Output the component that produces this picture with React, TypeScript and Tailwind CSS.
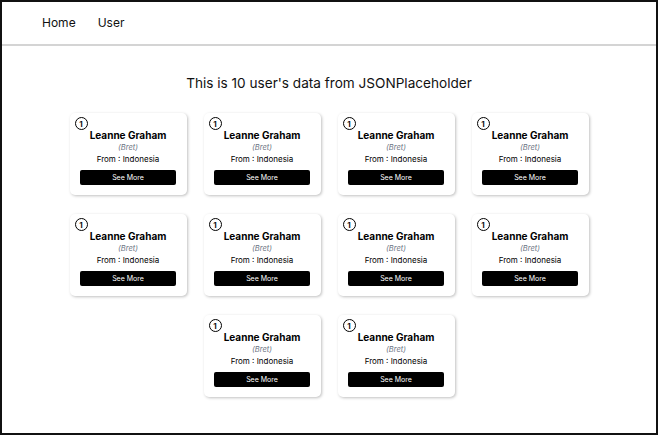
import React from "react";

const users = Array.from({ length: 10 }, () => ({
  id: 1,
  name: "Leanne Graham",
  username: "Bret",
  from: "Indonesia",
}));

function UserCard({ user }: { user: (typeof users)[number] }) {
  return (
    <div className="w-[117px] h-[82px] bg-white rounded-[5px] shadow-[1px_1px_3px_rgba(0,0,0,0.25)] px-[5px] pt-[4px] flex flex-col">
      <div className="w-[13px] h-[13px] rounded-full border-[1.5px] border-black flex items-center justify-center text-[8px] font-bold leading-none">
        {user.id}
      </div>
      <div className="text-center -mt-[1px]">
        <p className="text-[10px] font-bold leading-[13px] text-black">{user.name}</p>
        <p className="text-[7.5px] italic text-gray-500 leading-[10px] mt-[1px]">({user.username})</p>
        <p className="text-[8px] text-black leading-[10px] mt-[1px]">From : {user.from}</p>
      </div>
      <button className="mt-[6px] mx-auto w-[96px] h-[15px] bg-black text-white text-[7px] rounded-[2px] leading-none">
        See More
      </button>
    </div>
  );
}

export default function App() {
  return (
    <div className="w-[658px] h-[435px] border-2 border-[#111] bg-white font-['Inter',sans-serif] text-[#111] overflow-hidden">
      <header className="w-full h-[44px] border-b-2 border-[#d4d4d4] flex items-center">
        <nav className="flex gap-[22px] pl-[40px] text-[12px]">
          <a href="#">Home</a>
          <a href="#">User</a>
        </nav>
      </header>
      <main className="flex flex-col items-center">
        <h1 className="text-[13.6px] mt-[27px] mb-[20px]">This is 10 user's data from JSONPlaceholder</h1>
        <div className="flex flex-wrap justify-center gap-x-[17px] gap-y-[19px] w-[520px]">
          {users.map((u, i) => (
            <UserCard key={i} user={u} />
          ))}
        </div>
      </main>
    </div>
  );
}
